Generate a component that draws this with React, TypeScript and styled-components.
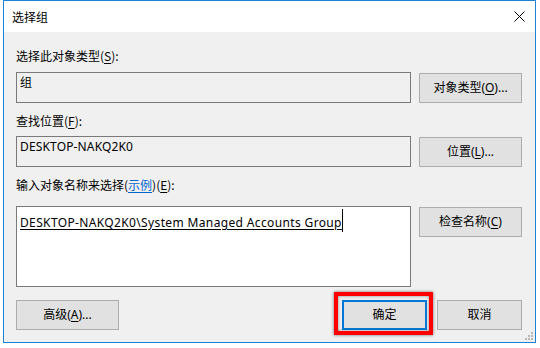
import React from "react";
import styled, { createGlobalStyle } from "styled-components";

const GlobalStyle = createGlobalStyle`
  html, body {
    margin: 0;
    padding: 0;
    background: #ffffff;
  }
  body {
    font-family: "Noto Sans", "Noto Sans CJK SC", sans-serif;
    font-size: 12px;
    color: #000000;
  }
`;

const Page = styled.div`
  width: 540px;
  height: 348px;
  padding-left: 3px;
  box-sizing: border-box;
`;

const Window = styled.div`
  width: 533px;
  height: 343px;
  box-sizing: border-box;
  border: 1px solid #1883d7;
  display: flex;
  flex-direction: column;
  position: relative;
`;

const TitleBar = styled.div`
  height: 31px;
  flex-shrink: 0;
  background: #ffffff;
  display: flex;
  align-items: center;
  justify-content: space-between;
  padding: 0 10px 0 8px;
`;

const Title = styled.span`
  font-family: "Noto Sans CJK SC", sans-serif;
  font-size: 12px;
  line-height: 16px;
`;

const Body = styled.div`
  flex: 1;
  background: #f0f0f0;
  padding: 16px 13px 0 12px;
  display: flex;
  flex-direction: column;
`;

const Label = styled.div<{ gap?: number }>`
  line-height: 16px;
  height: 16px;
  margin-bottom: ${({ gap }) => gap ?? 8}px;
  font-family: "Noto Sans CJK SC", sans-serif;
  white-space: nowrap;
`;

const Key = styled.span`
  text-decoration: underline;
  text-underline-offset: 2px;
`;

const Link = styled.span`
  color: #0066cc;
  text-decoration: underline;
  text-underline-offset: 2px;
`;

const Row = styled.div<{ after?: number }>`
  display: flex;
  gap: 8px;
  align-items: flex-start;
  margin-bottom: ${({ after }) => after ?? 10}px;
`;

const Field = styled.div`
  width: 395px;
  height: 31px;
  box-sizing: border-box;
  border: 1px solid #7a7a7a;
  background: #f0f0f0;
  padding: 2px 0 0 3px;
  line-height: 16px;
  letter-spacing: 0.15px;
  font-family: "Noto Sans", "Noto Sans CJK SC", sans-serif;
`;

const NameBox = styled.div`
  width: 395px;
  height: 81px;
  box-sizing: border-box;
  border: 1px solid #7a7a7a;
  background: #ffffff;
  padding: 5px 0 0 3px;
  line-height: 16px;
  white-space: nowrap;
  display: flex;
  align-items: flex-start;
`;

const Resolved = styled.span`
  text-decoration: underline;
  text-underline-offset: 2px;
  letter-spacing: 0.36px;
  padding-top: 3px;
`;

const Caret = styled.span`
  display: inline-block;
  width: 1px;
  height: 23px;
  background: #000000;
  margin-top: -3px;
`;

const Button = styled.button<{ w?: number; primary?: boolean }>`
  width: ${({ w }) => w ?? 103}px;
  height: 30px;
  flex-shrink: 0;
  box-sizing: border-box;
  margin: 1px 0 0;
  padding: 0;
  background: #e1e1e1;
  border: ${({ primary }) => (primary ? "2px solid #0078d7" : "1px solid #adadad")};
  font-family: "Noto Sans", "Noto Sans CJK SC", sans-serif;
  font-size: 12px;
  color: #000000;
  line-height: 16px;
`;

const Footer = styled.div`
  display: flex;
  align-items: flex-start;
  margin-top: 12px;
`;

const Spacer = styled.div`
  flex: 1;
`;

const Highlight = styled.div`
  position: relative;
  margin-right: 10px;

  &::after {
    content: "";
    position: absolute;
    left: -8px;
    right: -6px;
    top: -7px;
    bottom: -5px;
    border: 4px solid #ff0000;
    box-shadow: 0 0 3px rgba(0, 0, 0, 0.55), inset 0 0 3px rgba(0, 0, 0, 0.45);
    pointer-events: none;
  }
`;

const Grip = styled.svg`
  position: absolute;
  right: 1px;
  bottom: 1px;
`;

const CloseIcon = () => (
  <svg width="11" height="11" viewBox="0 0 11 11">
    <path d="M0.5 0.5 L10.5 10.5 M10.5 0.5 L0.5 10.5" stroke="#000" strokeWidth="1" fill="none" />
  </svg>
);

export default function App() {
  return (
    <Page>
      <GlobalStyle />
      <Window>
        <TitleBar>
          <Title>选择组</Title>
          <CloseIcon />
        </TitleBar>
        <Body>
          <Label>
            选择此对象类型(<Key>S</Key>):
          </Label>
          <Row>
            <Field>组</Field>
            <Button>
              对象类型(<Key>O</Key>)...
            </Button>
          </Row>
          <Label gap={7}>
            查找位置(<Key>F</Key>):
          </Label>
          <Row>
            <Field>DESKTOP-NAKQ2K0</Field>
            <Button>
              位置(<Key>L</Key>)...
            </Button>
          </Row>
          <Label gap={13}>
            输入对象名称来选择(<Link>示例</Link>)(<Key>E</Key>):
          </Label>
          <Row after={0}>
            <NameBox>
              <Resolved>DESKTOP-NAKQ2K0\System Managed Accounts Group</Resolved>
              <Caret />
            </NameBox>
            <Button>
              检查名称(<Key>C</Key>)
            </Button>
          </Row>
          <Footer>
            <Button>
              高级(<Key>A</Key>)...
            </Button>
            <Spacer />
            <Highlight>
              <Button w={85} primary>
                确定
              </Button>
            </Highlight>
            <Button w={85}>取消</Button>
          </Footer>
        </Body>
        <Grip width="10" height="10" viewBox="0 0 10 10">
          <rect x="7" y="1" width="2" height="2" fill="#b8b8b8" />
          <rect x="4" y="4" width="2" height="2" fill="#b8b8b8" />
          <rect x="7" y="4" width="2" height="2" fill="#b8b8b8" />
          <rect x="1" y="7" width="2" height="2" fill="#b8b8b8" />
          <rect x="4" y="7" width="2" height="2" fill="#b8b8b8" />
          <rect x="7" y="7" width="2" height="2" fill="#b8b8b8" />
        </Grip>
      </Window>
    </Page>
  );
}
